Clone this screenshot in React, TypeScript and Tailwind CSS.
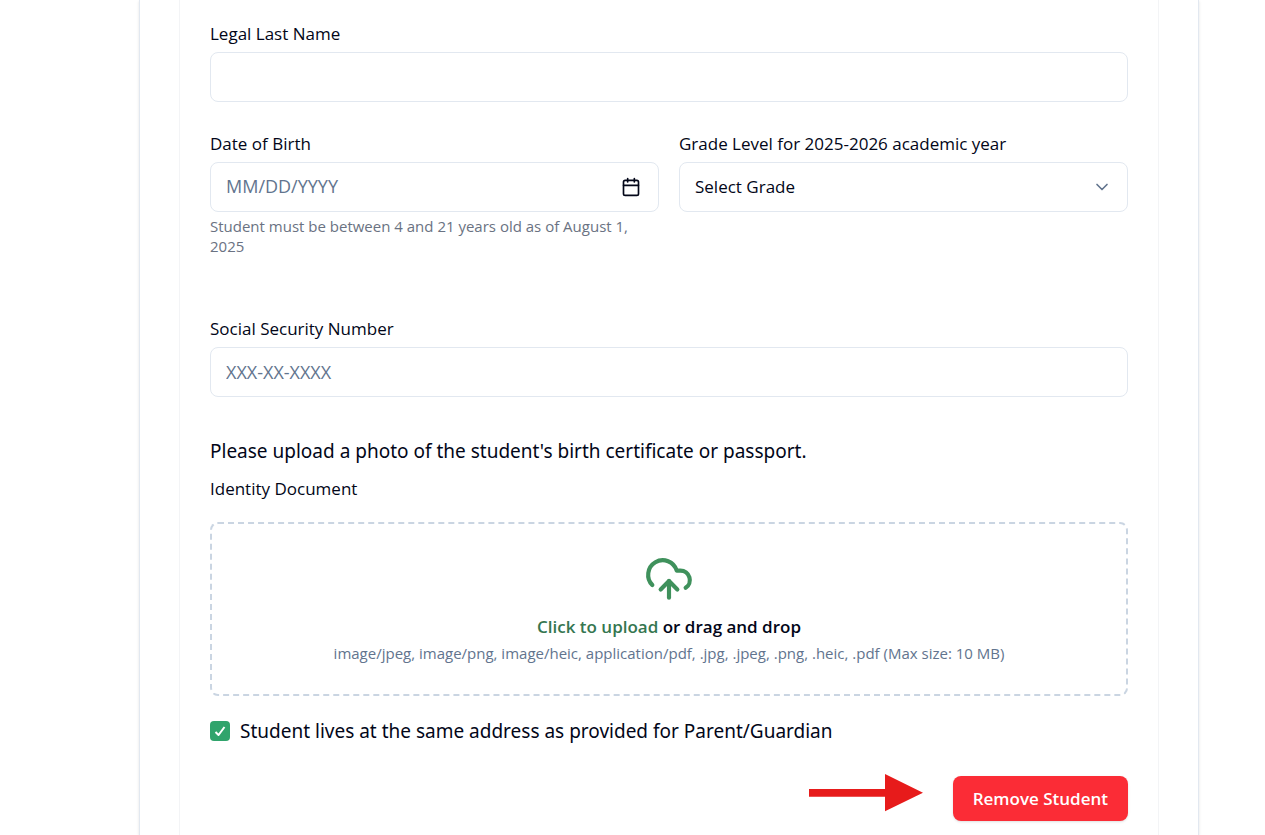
import { Calendar, ChevronDown, CloudUpload } from "lucide-react";

const labelClass = "block text-[17px] leading-6 text-slate-950";
const bodyClass = "font-['Noto_Sans','Open_Sans',sans-serif] text-[19px]";
const fieldClass =
  "mt-1.5 h-[50px] w-full rounded-lg border border-slate-200 bg-white px-[15px] text-[17px] text-slate-950 outline-none placeholder:text-lg placeholder:text-slate-500";

const acceptedTypes =
  "image/jpeg, image/png, image/heic, application/pdf, .jpg, .jpeg, .png, .heic, .pdf";

export default function App() {
  return (
    <div className="h-screen overflow-hidden bg-white pr-[66px] pl-[139px] font-['Open_Sans','Noto_Sans',sans-serif] text-slate-950">
      <main className="min-h-full border-x border-slate-200 px-[39px] shadow-sm">
        <form className="min-h-screen border-x border-gray-100 px-[30px] pt-[22px]">
          <div>
            <label htmlFor="lastName" className={labelClass}>
              Legal Last Name
            </label>
            <input id="lastName" type="text" className={fieldClass} />
          </div>

          <div className="mt-[30px] grid grid-cols-2 gap-5">
            <div>
              <label htmlFor="dob" className={labelClass}>
                Date of Birth
              </label>
              <div className="mt-1.5 flex h-[50px] items-center rounded-lg border border-slate-200 pr-[17px] pl-[15px]">
                <input
                  id="dob"
                  type="text"
                  placeholder="MM/DD/YYYY"
                  className="min-w-0 flex-1 bg-transparent text-[17px] outline-none placeholder:text-lg placeholder:text-slate-500"
                />
                <button type="button" aria-label="Open calendar">
                  <Calendar size={20} />
                </button>
              </div>
              <p className="mt-1 text-[15px] leading-5 text-gray-500">
                Student must be between 4 and 21 years old as of August 1, 2025
              </p>
            </div>
            <div>
              <label htmlFor="grade" className={labelClass}>
                Grade Level for 2025-2026 academic year
              </label>
              <div className="grid items-center">
                <select id="grade" className={`${fieldClass} col-start-1 row-start-1 appearance-none`}>
                  <option>Select Grade</option>
                </select>
                <ChevronDown
                  size={20}
                  className="pointer-events-none col-start-1 row-start-1 mt-1.5 mr-4 justify-self-end text-slate-500"
                />
              </div>
            </div>
          </div>

          <div className="mt-[61px]">
            <label htmlFor="ssn" className={labelClass}>
              Social Security Number
            </label>
            <input id="ssn" type="text" placeholder="XXX-XX-XXXX" className={fieldClass} />
          </div>

          <p className={`${bodyClass} mt-10 leading-7`}>
            Please upload a photo of the student's birth certificate or passport.
          </p>
          <label htmlFor="identity" className={`${labelClass} mt-3`}>
            Identity Document
          </label>
          <label
            htmlFor="identity"
            className="mt-[21px] flex cursor-pointer flex-col items-center rounded-lg border-2 border-dashed border-slate-300 pt-[30px] pb-[31px] text-center"
          >
            <CloudUpload size={50} className="text-[#3f915c]" />
            <span className="mt-2.5 text-[17px] leading-[25px] font-semibold">
              <span className="text-[#357650]">Click to upload</span> or drag and drop
            </span>
            <span className="mt-1 text-[15px] leading-5 text-slate-500">
              {acceptedTypes} (Max size: 10 MB)
            </span>
            <input id="identity" type="file" className="sr-only" />
          </label>

          <div className="mt-5 flex items-center gap-2.5">
            <span className="grid place-items-center">
              <input
                id="sameAddress"
                type="checkbox"
                defaultChecked
                className="col-start-1 row-start-1 size-5 appearance-none rounded-sm bg-[#30a46c]"
              />
              <svg
                width="12"
                height="10"
                viewBox="0 0 12 10"
                fill="none"
                stroke="currentColor"
                strokeWidth="2"
                className="pointer-events-none col-start-1 row-start-1 text-white"
                aria-hidden="true"
              >
                <polyline points="1.5 6 4.5 9 10.5 1" />
              </svg>
            </span>
            <label htmlFor="sameAddress" className={`${bodyClass} leading-[30px]`}>
              Student lives at the same address as provided for Parent/Guardian
            </label>
          </div>

          <div className="relative mt-[30px] flex justify-end">
            <svg
              width="114"
              height="38"
              viewBox="0 0 114 38"
              fill="#e71b1b"
              className="absolute -top-0.5 right-[205px]"
              aria-hidden="true"
            >
              <path d="M0 15h76V0l38 18.7L76 37.3V22.7H0z" />
            </svg>
            <button
              type="button"
              className="h-[45px] rounded-lg bg-[#fb2c36] px-5 text-[17px] font-semibold text-white shadow-sm"
            >
              Remove Student
            </button>
          </div>
        </form>
      </main>
    </div>
  );
}
